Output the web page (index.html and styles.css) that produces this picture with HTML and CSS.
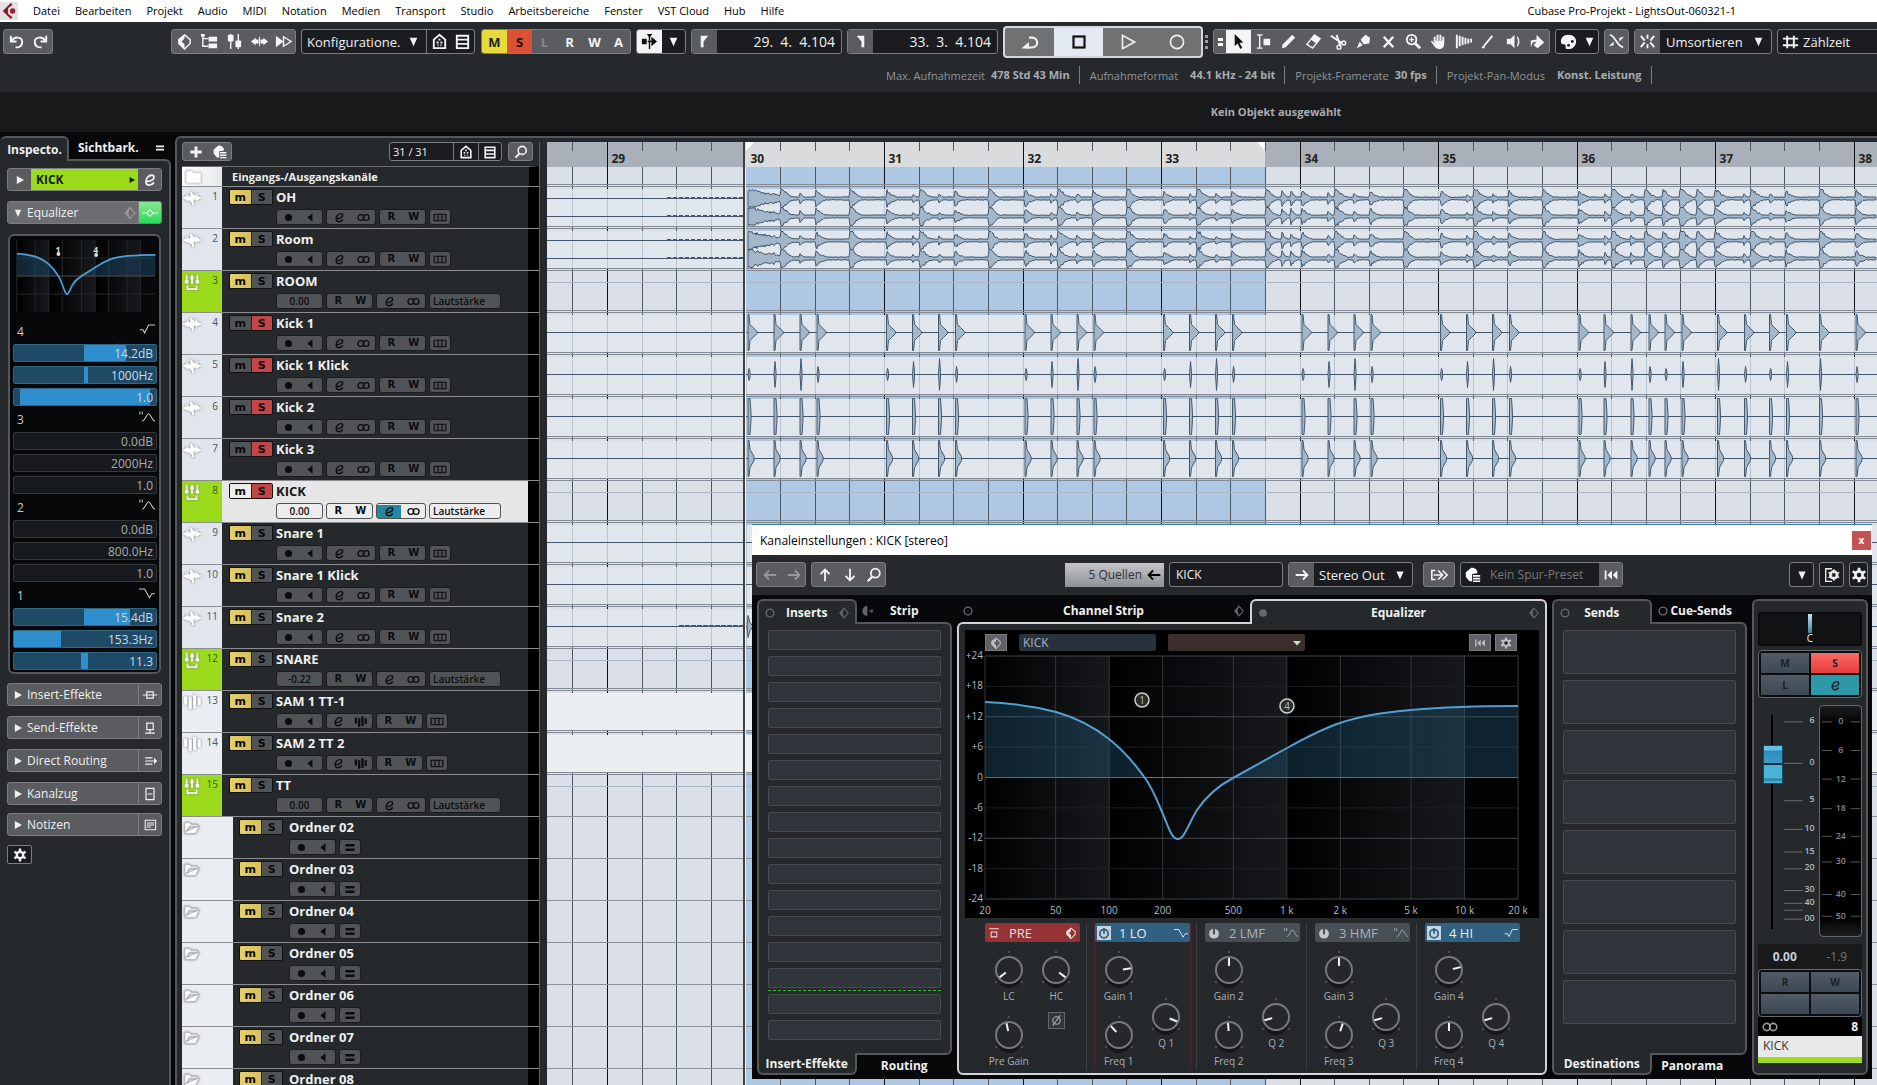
FILE: index.html
```html
<!DOCTYPE html>
<html lang="de">
<head>
  <meta charset="UTF-8" />
  <meta name="viewport" content="width=device-width, initial-scale=1" />
  <title>Cubase Pro-Projekt - LightsOut-060321-1</title>
  <link rel="stylesheet" href="styles.css">
</head>
<body>

  <svg class="sprite" aria-hidden="true">
    <symbol id="i-undo" viewBox="0 0 20 20"><path d="M4 4v6h6M4.500 9.500C8 4 16 5 16 10.500S11 16.500 9 16" fill="none" stroke="currentColor" stroke-width="2"/></symbol>
    <symbol id="i-redo" viewBox="0 0 20 20"><path d="M16 4v6h-6M15.500 9.500C12 4 4 5 4 10.500S9 16.500 11 16" fill="none" stroke="currentColor" stroke-width="2"/></symbol>
    <symbol id="i-diamond" viewBox="0 0 20 20"><path d="M10 3l6 5v4l-6 6-6-6V8z" fill="none" stroke="currentColor" stroke-width="1.500"/><path d="M10 3L4 8v4l6 6v-5l-3-3 3-3z" fill="currentColor"/></symbol>
    <symbol id="i-tree" viewBox="0 0 20 20"><path d="M3 3v12h6M3 7h6" fill="none" stroke="currentColor" stroke-width="1.500"/><path d="M1 2h4v3H1zM9 5h9v5H9zM9 12h9v5H9z" fill="currentColor"/></symbol>
    <symbol id="i-mixer" viewBox="0 0 20 20"><path d="M6 2v16M14 2v16" stroke="currentColor" stroke-width="1.500"/><rect x="3" y="3" width="6" height="7" rx="1" fill="currentColor"/><rect x="11" y="9" width="6" height="7" rx="1" fill="currentColor"/></symbol>
    <symbol id="i-split" viewBox="0 0 20 20"><path d="M1 10l5-4v8zM19 10l-5-4v8zM6 8h3v4H6zM11 8h3v4h-3z" fill="currentColor"/><path d="M10 5v10" stroke="currentColor"/></symbol>
    <symbol id="i-ff" viewBox="0 0 20 20"><path d="M2 4l8 6-8 6z" fill="currentColor"/><path d="M10 5l8 5-8 5z" fill="none" stroke="currentColor" stroke-width="1.500"/></symbol>
    <symbol id="i-down" viewBox="0 0 20 20"><path d="M6 6h8l-4 9z" fill="currentColor"/></symbol>
    <symbol id="i-right" viewBox="0 0 20 20"><path d="M6 5l9 5-9 5z" fill="currentColor"/></symbol>
    <symbol id="i-house" viewBox="0 0 20 20"><path d="M4 17V8l6-5 6 5v9z" fill="none" stroke="currentColor" stroke-width="2"/><path d="M10 7v2M7 11h2M11 11h2M8 14h1M11 14h1" stroke="currentColor" stroke-width="2"/></symbol>
    <symbol id="i-list" viewBox="0 0 20 20"><path d="M4 4h12v13H4zM4 8h12M4 12.500h12" fill="none" stroke="currentColor" stroke-width="2"/></symbol>
    <symbol id="i-scroll" viewBox="0 0 20 20"><path d="M2 7h5v6H2zM12 5l6 5-6 5zM7 2h6l-3 4z" fill="currentColor"/><path d="M10 4v14M8 10h5" stroke="currentColor" stroke-width="1.500"/></symbol>
    <symbol id="i-locl" viewBox="0 0 20 20"><path d="M6 4h8L9 10v6H6z" fill="currentColor"/></symbol>
    <symbol id="i-locr" viewBox="0 0 20 20"><path d="M14 4H6l5 6v6h3z" fill="currentColor"/></symbol>
    <symbol id="i-cycle" viewBox="0 0 20 20"><path d="M6 15h6a4.500 4.500 0 0 0 0-9H9" fill="none" stroke="currentColor" stroke-width="2"/><path d="M2 16l7-6v6z" fill="currentColor"/></symbol>
    <symbol id="i-stop" viewBox="0 0 20 20"><rect x="5" y="5" width="10" height="10" fill="none" stroke="currentColor" stroke-width="2"/></symbol>
    <symbol id="i-play" viewBox="0 0 20 20"><path d="M5 4l11 6-11 6z" fill="none" stroke="currentColor" stroke-width="1.500"/></symbol>
    <symbol id="i-rec" viewBox="0 0 20 20"><circle cx="10" cy="10" r="6" fill="none" stroke="currentColor" stroke-width="1.500"/></symbol>
    <symbol id="i-arrow" viewBox="0 0 20 20"><path d="M6 2l9 9-4 .500 3 5-2 1.500-3-6-3 3z" fill="currentColor"/></symbol>
    <symbol id="i-range" viewBox="0 0 20 20"><path d="M3 3h6M3 17h6M6 3v14" stroke="currentColor" stroke-width="1.500"/><path d="M10 7h7v7h-7z" fill="currentColor"/></symbol>
    <symbol id="i-pencil" viewBox="0 0 20 20"><path d="M3 17l1-4 10-10 3 3L7 16z" fill="currentColor"/></symbol>
    <symbol id="i-eraser" viewBox="0 0 20 20"><path d="M3 13l8-10 6 4-8 10z" fill="none" stroke="currentColor" stroke-width="1.500"/><path d="M7 8l4-5 6 4-4 5z" fill="currentColor"/></symbol>
    <symbol id="i-scissors" viewBox="0 0 20 20"><path d="M2 4l12 8M8 3l4 12" stroke="currentColor" stroke-width="2"/><circle cx="15.500" cy="11.500" r="2" fill="none" stroke="currentColor" stroke-width="1.500"/><circle cx="10.500" cy="16" r="2" fill="none" stroke="currentColor" stroke-width="1.500"/></symbol>
    <symbol id="i-glue" viewBox="0 0 20 20"><path d="M3 17l3-7 3 4zM7 8l5-5 5 3-1 6-6 1z" fill="currentColor"/></symbol>
    <symbol id="i-x" viewBox="0 0 20 20"><path d="M5 5l10 11M15 5L5 16" stroke="currentColor" stroke-width="2.500"/></symbol>
    <symbol id="i-zoom" viewBox="0 0 20 20"><circle cx="8" cy="8" r="5" fill="none" stroke="currentColor" stroke-width="2"/><path d="M12 12l5 5" stroke="currentColor" stroke-width="3"/><path d="M5.500 8h5M8 5.500v5" stroke="currentColor" stroke-width="1.500"/></symbol>
    <symbol id="i-hand" viewBox="0 0 20 20"><path d="M6 10V5M9 9V3M12 9V3M15 10V5" stroke="currentColor" stroke-width="2"/><path d="M5 9h11v4c0 3-2 5-5 5s-5-2-9-8l1-1 3 3z" fill="currentColor"/></symbol>
    <symbol id="i-comp" viewBox="0 0 20 20"><path d="M3 3v14M6 4v11M9 5v9M12 6v7M15 7v5M18 7v4" stroke="currentColor" stroke-width="2"/></symbol>
    <symbol id="i-line" viewBox="0 0 20 20"><path d="M5 15L14 4" stroke="currentColor" stroke-width="2"/><path d="M3 16h3" stroke="currentColor" stroke-width="2"/></symbol>
    <symbol id="i-speaker" viewBox="0 0 20 20"><path d="M3 7h4l4-4v14l-4-4H3z" fill="currentColor"/><path d="M14 5q3 5 0 10" fill="none" stroke="currentColor" stroke-width="1.500"/></symbol>
    <symbol id="i-bucket" viewBox="0 0 20 20"><path d="M9 3l8 8-7 6-4-3 3-4-4 1-2 5V9l6-1z" fill="currentColor"/></symbol>
    <symbol id="i-palette" viewBox="0 0 20 20"><path d="M10 3c-5 0-8 3-8 7 0 2 1 3 3 3 2 0 2 1 2 3s1 2 3 2c5 0 8-4 8-8s-3-7-8-7z" fill="currentColor"/><circle cx="14" cy="10" r="1.500" fill="#1b1c20"/><circle cx="10" cy="14" r="1.500" fill="#1b1c20"/></symbol>
    <symbol id="i-fade" viewBox="0 0 20 20"><path d="M3 3c5 0 8 13 14 13" fill="none" stroke="currentColor" stroke-width="2"/><path d="M2 15l5-1v-4zM18 5l-5 1v4z" fill="currentColor"/></symbol>
    <symbol id="i-snap" viewBox="0 0 20 20"><path d="M10 3v4M10 13v4M3 4l4 5M3 16l4-5M17 4l-4 5M17 16l-4-5" stroke="currentColor" stroke-width="2"/></symbol>
    <symbol id="i-grid" viewBox="0 0 20 20"><path d="M2 7h16M2 14h16M6.500 4v13M13.500 4v13" stroke="currentColor" stroke-width="2"/></symbol>
    <symbol id="i-menu" viewBox="0 0 20 20"><path d="M5 8h10M5 12h10" stroke="currentColor" stroke-width="2"/></symbol>
    <symbol id="i-e" viewBox="0 0 20 20"><path d="M5 11.500C9 12.500 15 10 15 6.500 15 3.500 10 3 7 6.500S4 16 8.500 16.500C11 16.800 13.500 15 15 13" fill="none" stroke="currentColor" stroke-width="2.200"/></symbol>
    <symbol id="i-eqon" viewBox="0 0 20 20"><path d="M0 10h6M14 10h6M10 6l4 4-4 4-4-4z" fill="none" stroke="currentColor" stroke-width="1.400"/></symbol>
    <symbol id="i-bypass" viewBox="0 0 20 20"><path d="M10 3l6 7-6 7-6-7z" fill="none" stroke="currentColor" stroke-width="1.500"/><path d="M10 3L4 10l6 7-2-7z" fill="currentColor"/></symbol>
    <symbol id="i-ins" viewBox="0 0 20 20"><path d="M1 10h18M6 6h8v8H6z" fill="none" stroke="currentColor" stroke-width="1.500"/></symbol>
    <symbol id="i-send" viewBox="0 0 20 20"><path d="M6 4h8v8H6zM10 12v4M4 16.500h12" fill="none" stroke="currentColor" stroke-width="1.500"/></symbol>
    <symbol id="i-route" viewBox="0 0 20 20"><path d="M4 6h9M4 10h12M4 14h9" stroke="currentColor" stroke-width="1.500"/><path d="M15 6l4 4-4 4z" fill="currentColor"/></symbol>
    <symbol id="i-strip" viewBox="0 0 20 20"><path d="M5 3h10v14H5zM7 10h6" fill="none" stroke="currentColor" stroke-width="1.500"/></symbol>
    <symbol id="i-note" viewBox="0 0 20 20"><path d="M4 4h13v12H4zM6 7.500h9M6 10h9M6 12.500h5" fill="none" stroke="currentColor" stroke-width="1.300"/></symbol>
    <symbol id="i-gear" viewBox="0 0 20 20"><path d="M10 2v16M3 6l14 8M17 6L3 14" stroke="currentColor" stroke-width="3"/><circle cx="10" cy="10" r="5.500" fill="currentColor"/><circle cx="10" cy="10" r="2.500" fill="#1b1c20"/></symbol>
    <symbol id="i-plus" viewBox="0 0 20 20"><path d="M10 3v14M3 10h14" stroke="currentColor" stroke-width="3.500"/></symbol>
    <symbol id="i-preset" viewBox="0 0 20 20"><path d="M8 2c4 0 7 2 7 6l-6 1v8H6L2 12V7z" fill="currentColor"/><path d="M10 11h8M10 14h8M10 17h8" stroke="currentColor" stroke-width="1.800"/></symbol>
    <symbol id="i-search" viewBox="0 0 20 20"><circle cx="11.500" cy="8" r="5" fill="none" stroke="currentColor" stroke-width="2"/><path d="M8 12l-5 5" stroke="currentColor" stroke-width="2.500"/></symbol>
    <symbol id="i-wave" viewBox="0 0 20 20"><path d="M0 10h2M3 8v4M5 6v7M7 8v5M9 3v12M11 5v13M13 7v5M15 5v8M17 8v4M18 10h2" stroke="currentColor" stroke-width="2"/></symbol>
    <symbol id="i-group" viewBox="0 0 20 20"><path d="M4 2v10M10 2v10M16 2v10M5 14v4h10v-4" fill="none" stroke="currentColor" stroke-width="2"/><path d="M2 8h4v3H2zM8 4h4v3H8zM14 8h4v3h-4z" fill="currentColor"/></symbol>
    <symbol id="i-inst" viewBox="0 0 20 20"><path d="M3 4v9M8 5v13M13 2v15M18 5v9" stroke="currentColor" stroke-width="3.500"/></symbol>
    <symbol id="i-folder" viewBox="0 0 20 20"><path d="M2 4h6l2 2h8v11H2z" fill="#fff" stroke="#cfd3d8"/></symbol>
    <symbol id="i-open" viewBox="0 0 20 20"><path d="M2 15V4h5l2 2h7v3M2 16h12l4-8H7z" fill="#fff" stroke="#b4b9be"/></symbol>
    <symbol id="i-dot" viewBox="0 0 20 20"><circle cx="10" cy="10" r="5.500" fill="currentColor"/></symbol>
    <symbol id="i-mon" viewBox="0 0 20 20"><path d="M6 8h2l5-5v14l-5-5H6z" fill="currentColor"/></symbol>
    <symbol id="i-stereo" viewBox="0 0 20 20"><circle cx="6" cy="10" r="4.500" fill="none" stroke="currentColor" stroke-width="2"/><circle cx="14" cy="10" r="4.500" fill="none" stroke="currentColor" stroke-width="2"/></symbol>
    <symbol id="i-lanes" viewBox="0 0 20 20"><path d="M1 5h18v10H1zM7 5v10M13 5v10" fill="none" stroke="currentColor" stroke-width="1.800"/></symbol>
    <symbol id="i-equal" viewBox="0 0 20 20"><path d="M3 6.500h14M3 13.500h14" stroke="currentColor" stroke-width="4"/></symbol>
    <symbol id="i-left2" viewBox="0 0 20 20"><path d="M17 10H4M9 5l-5 5 5 5" fill="none" stroke="currentColor" stroke-width="2"/></symbol>
    <symbol id="i-right2" viewBox="0 0 20 20"><path d="M3 10h13M11 5l5 5-5 5" fill="none" stroke="currentColor" stroke-width="2"/></symbol>
    <symbol id="i-up2" viewBox="0 0 20 20"><path d="M10 17V4M5 9l5-5 5 5" fill="none" stroke="currentColor" stroke-width="2"/></symbol>
    <symbol id="i-down2" viewBox="0 0 20 20"><path d="M10 3v13M5 11l5 5 5-5" fill="none" stroke="currentColor" stroke-width="2"/></symbol>
    <symbol id="i-export" viewBox="0 0 20 20"><path d="M6 5H2v10h4M4 10h10M9 5l5 5-5 5M14 5l5 5-5 5" fill="none" stroke="currentColor" stroke-width="1.800"/></symbol>
    <symbol id="i-rewind" viewBox="0 0 20 20"><path d="M4 5v10" stroke="currentColor" stroke-width="2"/><path d="M11 5v10l-5-5zM17 5v10l-5-5z" fill="currentColor"/></symbol>
    <symbol id="i-winset" viewBox="0 0 20 20"><path d="M10 3H3v14h7" fill="none" stroke="currentColor" stroke-width="1.500"/><circle cx="12" cy="10" r="4" fill="none" stroke="currentColor" stroke-width="2.500"/><path d="M12 3.500v13M6 7l12 6M18 7L6 13" stroke="currentColor" stroke-width="1.500"/><circle cx="12" cy="10" r="2" fill="#1b1c20"/></symbol>
    <symbol id="i-hishelf" viewBox="0 0 20 20"><path d="M1 11h4l2 4 5-10h8" fill="none" stroke="currentColor" stroke-width="1.300"/></symbol>
    <symbol id="i-loshelf" viewBox="0 0 20 20"><path d="M0 5h7l6 11 3-5h4" fill="none" stroke="currentColor" stroke-width="1.300"/></symbol>
    <symbol id="i-bell" viewBox="0 0 20 20"><path d="M1 3v4M4 3v4M4 15c4 0 5-9 8-9s4 9 8 9" fill="none" stroke="currentColor" stroke-width="1.300"/></symbol>
    <symbol id="i-pre" viewBox="0 0 20 20"><path d="M3 4h14M6 8.500h8v7H6z" fill="none" stroke="currentColor" stroke-width="1.500"/></symbol>
    <symbol id="i-power" viewBox="0 0 20 20"><circle cx="10" cy="11" r="6" fill="none" stroke="currentColor" stroke-width="2.500"/><path d="M10 3v8" stroke="currentColor" stroke-width="2.500"/></symbol>
    <symbol id="i-powerf" viewBox="0 0 20 20"><circle cx="10" cy="11" r="7" fill="#c4c8cb"/><path d="M10 3v9" stroke="#485057" stroke-width="3"/></symbol>
    <symbol id="i-ring" viewBox="0 0 20 20"><circle cx="10" cy="10" r="5.500" fill="none" stroke="currentColor" stroke-width="2"/></symbol>
    <symbol id="i-half" viewBox="0 0 20 20"><path d="M9 3v14a7 7 0 0 1 0-14z" fill="currentColor"/><path d="M11 10h7M15.500 7v6" stroke="currentColor" stroke-width="1.500"/></symbol>
    <symbol id="i-phase" viewBox="0 0 20 20"><circle cx="10" cy="10" r="5" fill="none" stroke="currentColor" stroke-width="1.500"/><path d="M5 17L15 3" stroke="currentColor" stroke-width="1.500"/></symbol>
  </svg>

  <nav class="menubar">
    <svg class="logo" viewBox="0 0 20 20"><path d="M12 1L3 10l9 9 2-2-5-4V7l5-4z" fill="#8d1c2c"/><circle cx="14" cy="10" r="3" fill="#a1202f"/></svg>
    <a href="#">Datei</a><a href="#">Bearbeiten</a><a href="#">Projekt</a><a href="#">Audio</a><a href="#">MIDI</a><a href="#">Notation</a><a href="#">Medien</a><a href="#">Transport</a><a href="#">Studio</a><a href="#">Arbeitsbereiche</a><a href="#">Fenster</a><a href="#">VST Cloud</a><a href="#">Hub</a><a href="#">Hilfe</a>
    <span class="doc-title">Cubase Pro-Projekt - LightsOut-060321-1</span>
  </nav>

  <header class="toolbar">
    <div class="grp undo" data-icons="undo redo"></div>
    <div class="grp setup" data-icons="diamond tree mixer split ff"></div>
    <div class="grp dark">
      <label class="drop config"><select aria-label="Konfiguration"><option>Konfiguratione.</option></select><svg class="ico"><use href="#i-down"/></svg></label>
      <button class="tb line" aria-label="Zonen"><svg class="ico"><use href="#i-house"/></svg></button>
      <button class="tb" aria-label="Liste"><svg class="ico"><use href="#i-list"/></svg></button>
    </div>
    <div class="grp states">
      <button class="tb yellow">M</button><button class="tb red">S</button><button class="tb off">L</button><button class="tb">R</button><button class="tb">W</button><button class="tb">A</button>
    </div>
    <div class="grp dark">
      <button class="tb on" aria-label="Auto-Scroll"><svg class="ico"><use href="#i-scroll"/></svg></button>
      <button class="tb" aria-label="Optionen"><svg class="ico"><use href="#i-down"/></svg></button>
    </div>
    <div class="grp dark locator"><button class="tb fill" aria-label="Linker Locator"><svg class="ico"><use href="#i-locl"/></svg></button><input aria-label="Linker Locator Position" value="29.  4.  4.104"></div>
    <div class="grp dark locator"><button class="tb fill" aria-label="Rechter Locator"><svg class="ico"><use href="#i-locr"/></svg></button><input aria-label="Rechter Locator Position" value="33.  3.  4.104"></div>
    <div class="transport">
      <button aria-label="Cycle"><svg class="ico"><use href="#i-cycle"/></svg></button>
      <button class="on" aria-label="Stop"><svg class="ico"><use href="#i-stop"/></svg></button>
      <button aria-label="Start"><svg class="ico"><use href="#i-play"/></svg></button>
      <button aria-label="Aufnahme"><svg class="ico"><use href="#i-rec"/></svg></button>
    </div>
    <span class="grip"></span>
    <div class="grp tools" data-icons="arrow range pencil eraser scissors glue x zoom hand comp line speaker bucket"><span class="handle"></span></div>
    <div class="grp dark color">
      <button class="tb" aria-label="Farbe"><svg class="ico"><use href="#i-palette"/></svg></button><button class="tb small" aria-label="Farbauswahl"><svg class="ico"><use href="#i-down"/></svg></button>
    </div>
    <div class="grp" data-icons="fade"></div>
    <div class="grp dark"><button class="tb fill" aria-label="Raster"><svg class="ico"><use href="#i-snap"/></svg></button>
      <label class="drop snap"><select aria-label="Rastermodus"><option>Umsortieren</option></select><svg class="ico"><use href="#i-down"/></svg></label></div>
    <div class="grp dark beat"><button class="tb" aria-label="Rastertyp"><svg class="ico"><use href="#i-grid"/></svg></button><span>Zählzeit</span></div>
  </header>

  <div class="status">
    <span>Max. Aufnahmezeit</span><b>478 Std 43 Min</b>
    <span>Aufnahmeformat</span><b class="wide">44.1 kHz - 24 bit</b>
    <span>Projekt-Framerate</span><b>30 fps</b>
    <span>Projekt-Pan-Modus</span><b class="wide">Konst. Leistung</b>
  </div>

  <div class="infoline">Kein Objekt ausgewählt</div>

  <main class="workspace">
    <aside class="inspector">
      <div class="tabs">
        <button class="tab active">Inspecto.</button>
        <button class="tab">Sichtbark.</button>
        <svg class="ico"><use href="#i-menu"/></svg>
      </div>
      <div class="inspector-body">
        <div class="channel-name">
          <button aria-label="Aufklappen"><svg class="ico"><use href="#i-right"/></svg></button>
          <strong>KICK <svg class="ico"><use href="#i-right"/></svg></strong>
          <button aria-label="Kanal bearbeiten"><svg class="ico"><use href="#i-e"/></svg></button>
        </div>
        <div class="section open">
          <button class="section-title"><svg class="ico"><use href="#i-down"/></svg>Equalizer</button>
          <svg class="ico dim"><use href="#i-bypass"/></svg>
          <button class="section-icon green" aria-label="EQ aktiv"><svg class="ico"><use href="#i-eqon"/></svg></button>
        </div>
        <div class="eq-box">
          <svg class="mini-eq" viewBox="0 0 149 76" preserveAspectRatio="none" id="miniEq"></svg>
          <div id="eqBars"></div>
        </div>
        <div id="sections"></div>
        <button class="gear" aria-label="Einstellungen"><svg class="ico"><use href="#i-gear"/></svg></button>
      </div>
    </aside>

    <section class="project">
      <div class="tracklist">
        <div class="list-head">
          <div class="grp" data-icons="plus preset"></div>
          <div class="grp dark count"><span>31 / 31</span>
            <button class="tb line" aria-label="Zonen"><svg class="ico"><use href="#i-house"/></svg></button>
            <button class="tb line" aria-label="Liste"><svg class="ico"><use href="#i-list"/></svg></button></div>
          <div class="grp" data-icons="search"></div>
        </div>
        <div class="io-row"><span class="io-color"><svg class="ico"><use href="#i-folder"/></svg></span><b>Eingangs-/Ausgangskanäle</b></div>
        <div id="tracks"></div>
      </div>
      <svg class="arrange" id="arrange"></svg>
    </section>
  </main>

  <section class="window">
    <div class="window-title">Kanaleinstellungen : KICK [stereo]<button aria-label="Schließen">x</button></div>
    <div class="window-bar">
      <div class="grp faded" data-icons="left2 right2"></div>
      <div class="grp" data-icons="up2 down2 search"></div>
      <button class="sources">5 Quellen<svg class="ico"><use href="#i-left2"/></svg></button>
      <input class="chan" aria-label="Kanalname" value="KICK">
      <div class="grp dark"><button class="tb fill" aria-label="Ausgang"><svg class="ico"><use href="#i-right2"/></svg></button>
        <label class="drop out"><select aria-label="Ausgangsrouting"><option>Stereo Out</option></select><svg class="ico"><use href="#i-down"/></svg></label></div>
      <div class="grp export" data-icons="export"></div>
      <div class="grp dark preset"><svg class="ico"><use href="#i-preset"/></svg><span>Kein Spur-Preset</span><button class="tb fill" aria-label="Zurücksetzen"><svg class="ico"><use href="#i-rewind"/></svg></button></div>
      <div class="right">
        <button class="sq" aria-label="Menü"><svg class="ico"><use href="#i-down"/></svg></button>
        <button class="sq" aria-label="Fensterlayout"><svg class="ico"><use href="#i-winset"/></svg></button>
        <button class="sq narrow" aria-label="Einstellungen"><svg class="ico"><use href="#i-gear"/></svg></button>
      </div>
    </div>
    <div class="window-body">
      <div class="panel inserts">
        <div class="tabs"><button class="tab active"><svg class="ico"><use href="#i-ring"/></svg><span>Inserts</span><svg class="ico"><use href="#i-bypass"/></svg></button><button class="tab"><svg class="ico"><use href="#i-half"/></svg><span>Strip</span></button></div>
        <div class="panel-body" id="inserts"></div>
        <div class="tabs bottom"><button class="tab active"><span>Insert-Effekte</span></button><button class="tab"><span>Routing</span></button></div>
      </div>

      <div class="panel equalizer">
        <div class="tabs"><button class="tab"><svg class="ico"><use href="#i-ring"/></svg><span>Channel Strip</span><svg class="ico"><use href="#i-bypass"/></svg></button><button class="tab active"><svg class="ico"><use href="#i-dot"/></svg><span>Equalizer</span><svg class="ico"><use href="#i-bypass"/></svg></button></div>
        <div class="panel-body">
          <div class="display">
            <div class="display-head">
              <button aria-label="Vergleich"><svg class="ico"><use href="#i-diamond"/></svg></button>
              <input aria-label="Spektrum Kanal" value="KICK">
              <label class="drop"><select aria-label="Vergleichskanal"><option></option></select><svg class="ico" viewBox="0 0 20 20"><path d="M2 6h16l-8 9z" fill="#d8d8d8"/></svg></label>
              <button class="first" aria-label="Zurücksetzen"><svg class="ico"><use href="#i-rewind"/></svg></button>
              <button aria-label="Einstellungen"><svg class="ico"><use href="#i-gear"/></svg></button>
            </div>
            <svg class="plot" id="plot" viewBox="0 0 574 266"></svg>
          </div>
          <div class="bands" id="bands"></div>
        </div>
      </div>

      <div class="panel sends">
        <div class="tabs"><button class="tab active"><svg class="ico"><use href="#i-ring"/></svg><span>Sends</span></button><button class="tab"><svg class="ico"><use href="#i-ring"/></svg><span>Cue-Sends</span></button></div>
        <div class="panel-body" id="sends"></div>
        <div class="tabs bottom"><button class="tab active"><span>Destinations</span></button><button class="tab"><span>Panorama</span></button></div>
      </div>

      <div class="strip">
        <div class="pan"><i></i>C</div>
        <div class="pad"><button>M</button><button class="solo">S</button><button>L</button><button class="edit" aria-label="Bearbeiten"><svg class="ico"><use href="#i-e"/></svg></button></div>
        <div class="fader-area">
          <input type="range" class="fader" aria-label="Pegel" min="0" max="100" value="83">
          <svg class="scale" id="scale" viewBox="0 0 32 232"></svg>
          <svg class="meter" id="meter" viewBox="0 0 42 230"></svg>
        </div>
        <div class="levels"><b>0.00</b><span>-1.9</span></div>
        <div class="pad rw"><button>R</button><button>W</button><button aria-label="Leer"></button><button aria-label="Leer"></button></div>
        <div class="chan-no"><svg class="ico"><use href="#i-stereo"/></svg><b>8</b></div>
        <div class="chan-name">KICK</div>
      </div>
    </div>
  </section>

  <script src="script.js"></script>
</body>
</html>
```
FILE: styles.css
```css
* {
  box-sizing: border-box;
}
body {
  margin: 0;
  height: 100vh;
  overflow: hidden;
  display: flex;
  flex-direction: column;
  position: relative;
  background: #08080a;
  color: #f0f0f0;
  font-family: "Open Sans", "Noto Sans", sans-serif;
  font-size: 12px;
}
button, input, select {
  font-family: inherit;
  font-size: 12px;
  color: inherit;
  background: none;
  border: 0;
  padding: 0;
  margin: 0;
  border-radius: 0;
}
select {
  appearance: none;
}
.sprite {
  position: absolute;
  width: 0;
  height: 0;
}
.ico {
  width: 16px;
  height: 16px;
  flex: none;
  display: block;
}

/* menu */
.menubar {
  height: 22px;
  flex: none;
  display: flex;
  align-items: center;
  gap: 15px;
  padding-bottom: 1px;
  background: #fff;
  color: #000;
  font-size: 11px;
  white-space: nowrap;
}
.menubar a {
  color: inherit;
  text-decoration: none;
}
.logo {
  width: 18px;
  height: 18px;
  background: #e2e2e4;
}
.doc-title {
  margin-left: auto;
  margin-right: 141px;
}

/* main toolbar */
.toolbar {
  height: 40px;
  flex: none;
  display: flex;
  align-items: center;
  padding: 0 0 1px 3px;
  gap: 5px;
  background: #25292c;
  overflow: hidden;
}
.toolbar .ico {
  width: 19px;
  height: 19px;
}
.grp {
  display: flex;
  flex: none;
  height: 25px;
  border: 1px solid #7b7d80;
  border-radius: 3px;
  background: #5a5c5f;
  overflow: hidden;
  align-items: stretch;
}
.grp.dark {
  background: #1b1c20;
}
.tb {
  width: 25px;
  display: flex;
  flex: none;
  align-items: center;
  justify-content: center;
  color: #f4f4f4;
  font-weight: 700;
}
.grp .tb:last-child {
  width: 23px;
}
.tb.fill {
  background: #5a5c5f;
}
.tb.line {
  border-left: 1px solid #7b7d80;
}
.tb.on {
  background: #f4f4f4;
  color: #111;
}
.tb.off {
  color: #85878a;
}
.tb.yellow {
  background: #e6da3c;
  color: #1c1c10;
}
.tb.red {
  background: #da5136;
  color: #1c1010;
}
.states {
  margin-left: 1px;
}
.states .tb {
  font-size: 13px;
}
.undo {
  margin-right: 113px;
}
.drop {
  display: flex;
  align-items: center;
}
.drop select {
  flex: 1;
  width: 0;
  font-size: 13px;
}
.drop .ico {
  margin-right: 3px;
}
.config {
  width: 124px;
  padding-left: 5px;
}
.snap {
  width: 111px;
  padding-left: 6px;
}
.out {
  width: 98px;
  padding-left: 5px;
}
.locator input {
  width: 124px;
  text-align: right;
  padding-right: 6px;
  font-size: 14px;
  white-space: pre;
}
.transport {
  display: flex;
  flex: none;
  height: 32px;
  width: 200px;
  border: 2px solid #d5d7d9;
  border-radius: 4px;
  background: #707173;
  overflow: hidden;
}
.transport button {
  flex: 1;
  display: flex;
  align-items: center;
  justify-content: center;
}
.transport .ico {
  width: 22px;
  height: 22px;
}
.transport .on {
  background: #e3e9f2;
  color: #111;
}
.grip {
  width: 3px;
  flex: none;
  height: 14px;
  margin-left: -3px;
  border-left: 3px dotted #9a9c9e;
}
.handle {
  width: 12px;
  background: linear-gradient(#fff, #fff) 4px 8px / 5px 3px no-repeat, linear-gradient(#fff, #fff) 4px 13px / 5px 3px no-repeat;
}
.tools .handle + .tb {
  background: #f4f4f4;
  color: #111;
}
.color .tb.small:last-child {
  width: 17px;
}
.beat {
  width: 120px;
  align-items: center;
  font-size: 13px;
}

/* status and info line */
.status {
  height: 30px;
  flex: none;
  display: flex;
  align-items: center;
  padding: 0 0 4px 886px;
  background: #25292c;
  color: #8f9396;
  font-size: 11px;
  white-space: nowrap;
}
.status b {
  line-height: 18px;
  padding: 0 9px 0 6px;
  margin-right: 10px;
  border-right: 1px solid #7d8083;
  color: #a9acaf;
}
.status .wide {
  padding-left: 12px;
}
.infoline {
  height: 40px;
  flex: none;
  padding-left: 675px;
  background: #18191b;
  color: #a9acaf;
  font-size: 11px;
  font-weight: 700;
  line-height: 40px;
  text-align: center;
}
.workspace {
  flex: 1;
  min-height: 0;
  padding-top: 4px;
  display: flex;
  gap: 4px;
}

/* inspector */
.inspector {
  width: 171px;
  flex: none;
  display: flex;
  flex-direction: column;
}
.tabs {
  display: flex;
  height: 23px;
  flex: none;
  align-items: stretch;
}
.tab {
  flex: 1;
  display: flex;
  align-items: center;
  justify-content: center;
  font-size: 12px;
  font-weight: 700;
  white-space: nowrap;
}
.tab.active {
  position: relative;
  height: 25px;
  background: #25292c;
  border: 2px solid #55585b;
  border-bottom: 0;
  border-radius: 6px 6px 0 0;
}
.inspector .tabs .tab {
  flex: none;
  padding: 0 5px 0 9px;
}
.inspector .tabs .active {
  width: 69px;
  padding: 0 5px 0 7px;
  border-left: 0;
}
.inspector .tabs .ico {
  margin: 4px 0 0 8px;
}
.inspector-body {
  flex: 1;
  background: #25292c;
  border: 2px solid #55585b;
  border-left: 0;
  border-bottom: 0;
  border-radius: 0 6px 0 0;
  padding: 7px 7px 0;
}
.channel-name, .section {
  display: flex;
  height: 23px;
  margin-bottom: 10px;
  border: 1px solid #7b7d80;
  border-radius: 3px;
  background: #5a5c5f;
  overflow: hidden;
  align-items: stretch;
}
.channel-name button, .section-icon {
  width: 23px;
  display: flex;
  align-items: center;
  justify-content: center;
}
.channel-name strong {
  flex: 1;
  display: flex;
  align-items: center;
  justify-content: space-between;
  padding-left: 5px;
  background: #9cdb1c;
  color: #15200a;
}
.channel-name strong .ico {
  width: 12px;
  height: 12px;
}
.section-title {
  flex: 1;
  display: flex;
  align-items: center;
  gap: 1px;
  padding-left: 2px;
}
.section.open {
  background: #6c6d70;
  align-items: center;
}
.section-icon {
  height: 21px;
  border-left: 1px solid #7b7d80;
}
.green {
  background: linear-gradient(#8be692, #25dd59);
}
.dim {
  color: #98999c;
}
.eq-box {
  margin: 0 1px 9px;
  border: 2px solid #55585b;
  border-radius: 6px;
  background: #07080a;
  padding: 2px 2px 2px 3px;
}
.mini-eq {
  display: block;
  width: 100%;
  height: 76px;
  margin-bottom: 4px;
}
.eq-head {
  display: flex;
  justify-content: space-between;
  align-items: center;
  height: 26px;
  padding: 0 2px 0 4px;
  color: #c8cbce;
}
.eq-head .ico {
  margin-bottom: 4px;
}
.bar {
  display: grid;
  height: 18px;
  margin-bottom: 4px;
}
.bar:nth-child(4n) {
  margin-bottom: 0;
}
.bar input, .bar span {
  grid-area: 1 / 1;
}
.bar input {
  appearance: none;
  width: 100%;
  height: 18px;
  border: 1px solid #33373c;
  border-radius: 2px;
  background: #16191e;
}
.bar.active input {
  border-color: #2f6684;
  background: linear-gradient(90deg, #1f4a66 var(--from), #2f8fce var(--from), #2f8fce var(--to), #1f4a66 var(--to));
}
.bar input::-webkit-slider-thumb {
  appearance: none;
  width: 1px;
}
.bar span {
  position: relative;
  text-align: right;
  padding-right: 4px;
  line-height: 19px;
  color: #a9acaf;
  pointer-events: none;
}
.bar.active span {
  color: #c6dcea;
}
.section:last-child {
  margin-top: -2px;
}
.gear {
  width: 25px;
  height: 19px;
  margin-top: -1px;
  border: 1px solid #7b7d80;
  border-radius: 2px;
  background: #1b1c20;
  display: flex;
  align-items: center;
  justify-content: center;
}

/* project: track list and arrangement */
.project {
  flex: 1;
  min-width: 0;
  display: flex;
  overflow: hidden;
  border: 2px solid #55585b;
  border-width: 2px 0 0 2px;
  border-radius: 6px 0 0 0;
  background: #25292c;
}
.tracklist {
  width: 358px;
  flex: none;
  margin: 4px 7px 0 5px;
  border-right: 1px solid #5d6063;
}
.list-head {
  display: flex;
  height: 24px;
  gap: 6px;
  padding-right: 6px;
}
.list-head .grp {
  height: 19px;
}
.count {
  margin-left: auto;
  width: 113px;
  font-size: 11px;
}
.count span {
  flex: 1;
  padding-left: 3px;
  line-height: 17px;
}
.io-row {
  display: flex;
  height: 20px;
  border-top: 1px solid #6a6d70;
  border-right: 10px solid #000;
  font-size: 11px;
}
.io-color {
  width: 40px;
  padding-left: 2px;
  background: linear-gradient(90deg, #fff, #e6e9ec);
}
.io-color .ico {
  width: 19px;
  height: 19px;
  filter: drop-shadow(0 0 1px #b0b5ba);
}
.io-row b {
  padding: 2px 0 0 10px;
}
.track {
  display: flex;
  height: 42px;
  border-top: 1px solid #8b8d90;
  background: linear-gradient(270deg, #000 11px, transparent 11px);
}
.track-color {
  width: 40px;
  display: flex;
  justify-content: space-between;
  padding: 2px 4px 0 1px;
  background: #e1e5ec;
  color: #4c5258;
  font-size: 10px;
}
.track-color .ico {
  width: 18px;
  height: 18px;
  color: #fff;
  filter: drop-shadow(0 0 1px #6f757d);
}
.group .track-color {
  background: #9cdb1c;
  color: #3c5a10;
}
.inst .track-color, .folder .track-color {
  background: #eaeef2;
}
.folder .track-color {
  width: 51px;
}
.track-main {
  flex: 1;
  margin-right: 11px;
  display: grid;
  grid-template-columns: 47px 1fr;
  grid-template-rows: 18px 16px;
  row-gap: 3px;
  padding: 1px 0 0 7px;
}
.folder .track-main {
  grid-template-columns: 50px 1fr;
  padding-left: 6px;
}
.track-main h3 {
  margin: 0;
  font-size: 13px;
  line-height: 18px;
}
.ms {
  display: flex;
  height: 16px;
  width: 44px;
  margin-top: 1px;
  border: 1px solid #111;
  border-radius: 2px;
  overflow: hidden;
}
.ms button {
  flex: 1;
  background: #515457;
  color: #08080a;
  font: 700 11px/13px "DejaVu Sans", sans-serif;
}
.ms button + button {
  border-left: 1px solid #222;
}
.ms .muted {
  background: linear-gradient(90deg, #e5d06c, #d8bf5a);
}
.ms .soloed {
  background: #c24548;
}
.controls {
  grid-column: 2;
  display: flex;
  gap: 3px;
}
.controls > span, .controls > button {
  display: flex;
  align-items: center;
  justify-content: space-around;
  height: 16px;
  width: 47px;
  border: 1px solid #1a1c1e;
  border-radius: 3px;
  background: #515457;
  color: #0b0c0e;
  font-size: 10px;
  font-weight: 600;
  line-height: 14px;
}
.controls > span:has(.wide) {
  width: 50px;
}
.controls span button {
  flex: 1;
  display: flex;
  justify-content: center;
  font: 700 10px/14px "DejaVu Sans", sans-serif;
}
.controls .ico {
  width: 13px;
  height: 13px;
}
.controls > .lane {
  width: 22px;
}
.controls .lane .ico {
  width: 16px;
}
.controls > .param {
  width: 72px;
  padding-left: 3px;
  justify-content: flex-start;
}
.selected .track-main {
  background: #e6e6e6;
  color: #161618;
}
.selected .ms button:first-child, .selected .controls > * {
  background: #ededed;
}
.selected .controls > * {
  border-color: #4e5052;
}
.controls .edit {
  background: #24889f;
}
.arrange {
  flex: 1;
  min-width: 0;
  height: 100%;
  margin-top: 4px;
  background: #dbe0e8;
}
.arrange text {
  font: 700 12px "Open Sans", sans-serif;
  fill: #222;
}

/* channel window */
.window {
  position: absolute;
  left: 752px;
  right: 5px;
  top: 524px;
  background: #08080a;
  border-top: 1px solid #3d7fb8;
}
.window-title {
  height: 30px;
  display: flex;
  align-items: center;
  justify-content: space-between;
  padding: 0 1px 0 8px;
  background: #fff;
  color: #000;
}
.window-title button {
  width: 19px;
  height: 19px;
  background: #c25254;
  color: #fff;
  font-size: 10px;
  font-weight: 700;
}
.window-bar {
  height: 40px;
  display: flex;
  align-items: center;
  padding: 0 4px 1px;
  gap: 5px;
  background: #25292c;
}
.window-bar .ico {
  width: 18px;
  height: 18px;
}
.faded .tb {
  color: #96989a;
}
.sources {
  width: 99px;
  height: 24px;
  margin-left: 174px;
  display: flex;
  align-items: center;
  justify-content: flex-end;
  gap: 3px;
  padding-right: 1px;
  background: linear-gradient(#c3c5c8, #8f9295);
  color: #303235;
}
.sources .ico {
  color: #000;
}
.chan {
  width: 114px;
  height: 25px;
  padding-left: 6px;
  border: 1px solid #7b7d80;
  border-radius: 3px;
  background: #1b1c20;
}
.window-bar .export {
  margin-left: 5px;
  width: 32px;
  justify-content: center;
}
.preset {
  width: 163px;
  align-items: center;
  color: #77797c;
}
.preset > .ico {
  margin: 0 3px;
  color: #fff;
}
.preset span {
  flex: 1;
  padding-left: 5px;
}
.preset .tb {
  height: 100%;
}
.right {
  margin-left: auto;
  display: flex;
  gap: 5px;
}
.sq {
  width: 25px;
  height: 25px;
  border: 1px solid #7b7d80;
  border-radius: 3px;
  background: #1b1c20;
  display: flex;
  align-items: center;
  justify-content: center;
}
.sq.narrow {
  width: 19px;
}
.window-body {
  display: flex;
  gap: 5px;
  padding: 4px 4px 4px 5px;
  height: 484px;
}
.panel {
  width: 195px;
  flex: none;
  display: flex;
  flex-direction: column;
}
.panel-body {
  flex: 1;
  background: #25292c;
  border: 2px solid #55585b;
  border-radius: 0 6px 6px 0;
  padding: 6px 9px;
}
.panel .tab {
  min-width: 0;
}
.panel .tab span {
  flex: 1;
}
.panel .tab .ico {
  width: 14px;
  height: 14px;
  margin: 0 4px;
  color: #66696c;
}
.panel .ico + span:last-child {
  padding-right: 22px;
}
.panel.sends .tab:last-child .ico {
  margin: 0 0 0 4px;
}
.panel.sends .tab:last-child span {
  padding-right: 14px;
}
.tabs.bottom {
  height: 20px;
}
.tabs.bottom .active {
  height: 22px;
  margin-top: -2px;
  border: 2px solid #55585b;
  border-top: 0;
  border-radius: 0 0 6px 6px;
}
.slot {
  height: 20px;
  margin-bottom: 6px;
  border: 1px solid #484c51;
  border-radius: 2px;
  background: #30343b;
}
.slot.postline {
  margin-bottom: 2px;
}
.postfader {
  height: 1px;
  border-top: 1px dashed #2fbd2f;
  margin-bottom: 3px;
}
.sends .slot {
  height: 44px;
}
.equalizer {
  flex: 1;
  min-width: 0;
}
.equalizer .panel-body {
  border-color: #d2d4d6;
  border-radius: 6px 0 6px 6px;
  padding: 6px 6px 0;
}
.equalizer .tab.active {
  border-color: #d2d4d6;
}
.display {
  background: #000;
}
.display-head {
  display: flex;
  height: 22px;
  padding: 4px 22px 0 20px;
  gap: 4px;
}
.display-head button {
  width: 22px;
  height: 17px;
  display: flex;
  align-items: center;
  justify-content: center;
  background: #5f6164;
  border: 1px solid #77797c;
  color: #bdbfc1;
}
.display-head .first {
  margin-left: auto;
}
.display-head input {
  width: 137px;
  height: 17px;
  margin: 0 8px;
  padding-left: 4px;
  border-radius: 2px;
  background: #29323b;
  color: #a7b4bf;
}
.display-head .drop {
  width: 137px;
  height: 17px;
  border-radius: 2px;
  background: #3a2f2c;
}
.display-head .ico {
  width: 14px;
  height: 14px;
}
.display-head .drop .ico {
  width: 10px;
}
.plot {
  display: block;
  width: 100%;
  overflow: visible;
}
.plot text {
  font-size: 10px;
  fill: #b0bcc6;
}
.bands {
  display: flex;
  gap: 15px;
  padding: 5px 19px 0 20px;
}
.band {
  flex: 1;
  min-width: 0;
  height: 147px;
  display: grid;
  grid-template-columns: minmax(0, 1fr) minmax(0, 1fr);
  grid-template-rows: 19px minmax(0, 1fr);
}
.band + .band {
  box-shadow: -8px 0 #25292c, -9px 0 #3b3f43;
}
.band + .band.focus {
  box-shadow: -1px 0 #572428, 1px 0 #572428, -8px 0 #25292c, -9px 0 #3b3f43;
}
.band h4 {
  grid-column: 1 / 3;
  margin: 0;
  display: flex;
  align-items: center;
  gap: 8px;
  padding: 0 2px;
  border-radius: 2px;
  background: #485057;
  color: #aab0b5;
  font-size: 13px;
  font-weight: 400;
}
.band h4 .ico {
  width: 14px;
  height: 14px;
}
.band h4 .ico:last-child {
  margin-left: auto;
}
.band.on h4 {
  background: #316080;
  color: #e2edf5;
}
.band.on h4 .ico:first-child {
  background: #c4d3df;
  color: #316080;
}
.band.pre h4 {
  background: #943335;
  color: #eedede;
}
.col {
  display: flex;
  flex-direction: column;
  padding-top: 8px;
  align-items: center;
}
.col.low {
  padding-top: 55px;
}
.pre .low {
  padding-top: 8px;
}
.knob {
  height: 65px;
  width: 46px;
  flex: none;
  display: flex;
  flex-direction: column;
  align-items: center;
  color: #a7b0b7;
  font-size: 10px;
  line-height: 12px;
  white-space: nowrap;
}
.knob svg {
  width: 34px;
  height: 40px;
  flex: none;
}
.phase {
  width: 17px;
  height: 17px;
  margin-top: -3px;
  border: 1px solid #66696c;
  background: #33373a;
  color: #a7b0b7;
}
.phase .ico {
  width: 15px;
  height: 15px;
}

/* fader strip */
.strip {
  width: 116px;
  flex: none;
  border: 2px solid #55585b;
  border-radius: 6px;
  background: #25292c;
  padding: 11px 4px 0;
  display: flex;
  flex-direction: column;
}
.pan {
  height: 34px;
  border: 2px solid #0a0a0b;
  border-radius: 3px;
  background: #101214;
  display: flex;
  flex-direction: column;
  align-items: center;
  font-size: 10px;
  line-height: 11px;
}
.pan i {
  width: 4px;
  height: 19px;
  background: linear-gradient(#bfe0f2, #4a7f9d);
}
.pad {
  margin-top: 4px;
  display: grid;
  grid-template-columns: 1fr 1fr;
  grid-template-rows: 1fr 1fr;
  gap: 2px;
  padding: 2px;
  height: 48px;
  border: 1px solid #66696c;
  border-radius: 4px;
  background: #0c0d0f;
}
.pad button {
  display: flex;
  align-items: center;
  justify-content: center;
  background: linear-gradient(#525b64, #3c4854);
  color: #1c2024;
  font-size: 10px;
  font-weight: 700;
}
.pad .solo {
  background: linear-gradient(#f86a66, #e83c3c);
}
.pad .edit {
  background: #2e97a8;
}
.pad .edit .ico {
  width: 13px;
  height: 13px;
}
.fader-area {
  display: flex;
  height: 246px;
  padding-top: 7px;
}
.fader {
  appearance: none;
  writing-mode: vertical-lr;
  direction: rtl;
  width: 20px;
  height: 214px;
  margin: 10px 0 0 5px;
  background: linear-gradient(90deg, transparent 8px, #000 8px, #000 10px, transparent 10px);
}
.fader::-webkit-slider-thumb {
  appearance: none;
  width: 20px;
  height: 39px;
  border: 1px solid #134b66;
  background: linear-gradient(#5fc4e8 0, #5fc4e8 4px, #2e8cba 5px, #3a9cc8 17px, #072a3c 17px, #072a3c 19px, #4cb2da 19px, #4cb2da 32px, #2478a0 33px, #55bce2 37px);
}
.scale {
  width: 32px;
  height: 232px;
}
.scale text {
  font-size: 9px;
  font-weight: 600;
  fill: #b5b8bb;
}
.meter {
  width: 44px;
  height: 232px;
  margin-left: 4px;
  border: 1px solid #66696c;
  border-radius: 4px;
  background: linear-gradient(#1d1e20, #000 18px, #000 212px, #1d1e20);
}
.meter text {
  font-size: 9px;
  font-weight: 600;
  fill: #85888b;
}
.levels {
  display: flex;
  justify-content: space-around;
  align-items: center;
  height: 25px;
  background: #18191b;
  color: #c3d0dd;
}
.levels span {
  color: #777a7d;
}
.rw {
  margin-top: 0;
}
.chan-no {
  display: flex;
  justify-content: space-between;
  align-items: center;
  height: 19px;
  padding: 0 4px;
  background: #000;
}
.chan-no .ico {
  color: #999;
}
.chan-name {
  height: 27px;
  padding: 1px 0 0 5px;
  background: #e8e8e8;
  border-bottom: 6px solid #9cdb1c;
  color: #333;
}
```
FILE: script.js
```js
const icon = name => `<svg class="ico"><use href="#i-${name}"/></svg>`;
const $ = id => document.getElementById(id);

// icon button groups
document.querySelectorAll('[data-icons]').forEach(el => {
  el.innerHTML += el.dataset.icons.split(' ')
    .map(n => `<button class="tb" aria-label="${n}">${icon(n)}</button>`).join('');
});

// inspector equalizer
const eqBands = [
  [4, 'hishelf', true, [['14.2dB', 49, 79], ['1000Hz', 49, 52], ['1.0', 4, 96]]],
  [3, 'bell', false, [['0.0dB'], ['2000Hz'], ['1.0']]],
  [2, 'bell', false, [['0.0dB'], ['800.0Hz'], ['1.0']]],
  [1, 'loshelf', true, [['15.4dB', 49, 82], ['153.3Hz', 0, 33], ['11.3', 47, 52]]]
];
$('eqBars').innerHTML = eqBands.map(([no, shape, on, bars]) => `
  <div><div class="eq-head">${no}${icon(shape)}</div>` + bars.map(([text, from = 0, to = 0]) =>
  `<label class="bar ${on ? 'active' : ''}"><input type="range" value="${to}" aria-label="Band ${no} ${text}" style="--from:${from}%;--to:${to}%"><span>${text}</span></label>`
).join('') + '</div>').join('');

$('sections').innerHTML = [['Insert-Effekte', 'ins'], ['Send-Effekte', 'send'], ['Direct Routing', 'route'], ['Kanalzug', 'strip'], ['Notizen', 'note']]
  .map(([t, i]) => `<div class="section"><button class="section-title">${icon('right')}${t}</button><button class="section-icon" aria-label="${t} Status">${icon(i)}</button></div>`).join('');

// curve in plot coordinates (0..533, 0..243)
const curve = 'M0 46C26 47 48 50 71 56C92 62 109 71 124 83C138 94 150 108 160 122C168 133 173 147 178 158C184 173 187 183 193 183C199 183 203 169 212 154C222 139 235 129 248 122C266 112 284 102 302 92C320 82 337 73 355 67C378 59 402 56 426 54C460 51 500 50 533 50';

$('miniEq').innerHTML = `
  <defs><linearGradient id="dec"><stop offset="0" stop-color="#000"/><stop offset="1" stop-color="#16191c"/></linearGradient></defs>
  <rect x="4" y="2" width="33" height="72" fill="url(#dec)"/><rect x="37" y="2" width="48" height="72" fill="url(#dec)"/><rect x="85" y="2" width="47" height="72" fill="url(#dec)"/>
  <path d="M4 2v72M23 2v72M37 2v72M51 2v72M71 2v72M85 2v72M99 2v72M118 2v72M132 2v72M4 20h143M4 56h143" stroke="#25292c"/>
  <path d="M4 38h143" stroke="#6a4550"/>
  <g transform="translate(4 2) scale(.269 .296)"><path d="${curve}V122H248C230 135 210 183 193 183C180 170 175 145 160 122H0z" fill="#1b4a6a" opacity=".5"/><path d="${curve}" fill="none" stroke="#4f9fd0" stroke-width="6"/></g>
  <g fill="#ddd" font-size="9" font-weight="700"><text x="44" y="15">1</text><text x="83" y="15">4</text><circle cx="47" cy="16" r="2"/><circle cx="86" cy="17" r="2"/></g>`;

// track list
const tracks = [
  ['OH', 'audio', 'm'], ['Room', 'audio', 'm'], ['ROOM', 'group', 'm', '0.00'],
  ['Kick 1', 'audio', 's'], ['Kick 1 Klick', 'audio', 's'], ['Kick 2', 'audio', 's'], ['Kick 3', 'audio', 's'],
  ['KICK', 'group', 's', '0.00'], ['Snare 1', 'audio', 'm'], ['Snare 1 Klick', 'audio', 'm'], ['Snare 2', 'audio', 'm'],
  ['SNARE', 'group', 'm', '-0.22'], ['SAM 1 TT-1', 'inst', 'm'], ['SAM 2 TT 2', 'inst', 'm'], ['TT', 'group', 'm', '0.00'],
  ['Ordner 02', 'folder', 'm'], ['Ordner 03', 'folder', 'm'], ['Ordner 04', 'folder', 'm'], ['Ordner 05', 'folder', 'm'],
  ['Ordner 06', 'folder', 'm'], ['Ordner 07', 'folder', 'm'], ['Ordner 08', 'folder', 'm']
];
const b = (html, label, cls = '') => `<button class="${cls}" aria-label="${label}">${html}</button>`;

function controls(type, value, selected) {
  const rec = `<span>${b(icon('dot'), 'Aufnahme')}${b(icon('mon'), 'Monitor')}</span>`;
  const rw = `<span>${b('R', 'Read')}${b('W', 'Write')}</span>`;
  const edit = second => `<span>${b(icon('e'), 'Bearbeiten', selected ? 'edit' : '')}${b(icon(second), 'Kanal', second === 'stereo' ? 'wide' : '')}</span>`;
  const lane = i => `<button class="lane" aria-label="Spuren">${icon(i)}</button>`;
  if (type === 'group') return `<span>${value}</span>${rw}${edit('stereo')}<button class="param">Lautstärke</button>`;
  if (type === 'folder') return rec + lane('equal');
  return rec + edit(type === 'inst' ? 'inst' : 'stereo') + rw + lane('lanes');
}

const typeIcon = { audio: 'wave', group: 'group', inst: 'inst', folder: 'open' };
$('tracks').innerHTML = tracks.map(([name, type, ms, value], i) => `
  <div class="track ${type} ${i === 7 ? 'selected' : ''}">
    <div class="track-color">${icon(typeIcon[type])}${type === 'folder' ? '' : i + 1}</div>
    <div class="track-main">
      <div class="ms"><button class="${ms === 'm' ? 'muted' : ''}">m</button><button class="${ms === 's' ? 'soloed' : ''}">S</button></div>
      <h3>${name}</h3>
      <div class="controls">${controls(type, value, i === 7)}</div>
    </div>
  </div>`).join('');

// arrangement
const BAR = 138.5, BAR29 = 60.5, CURSOR = 197, LOC_L = 199, LOC_R = 718;
const rowTop = i => 44 + i * 42;
let seed = 7;
const rnd = () => (seed = (seed * 16807) % 2147483647) / 2147483647;

const kicks = [];
for (let bar = 1; bar < 10; bar++) {
  const at = bar === 7 ? [2, 27, 54, 72, 88, 105] : bar === 8 ? [2, 29, 54, 71, 104] : [2, 28, 54, 71];
  at.forEach(x => kicks.push(BAR29 + bar * BAR + x));
}

function spikes(cy, shape) {
  return kicks.map((x, i) => `M${x} ${cy}` + shape(i).map(([dx, a]) => `L${x + dx} ${cy - a}`).join('') +
    shape(i).reverse().map(([dx, a]) => `L${x + dx} ${cy + a}`).join('') + 'z').join('');
}

// drum room sound: each hit decays, the envelope is sampled every pixel
const hits = [];
for (let bar = 1; bar < 10; bar++) {
  [[2, .8, 6], [28, .5, 3], [34.6, 1.4, 6], [54, .5, 4], [70, .8, 6], [104, 1.5, 5]].forEach(([x, a, d]) => hits.push([BAR29 + bar * BAR + x, a, d]));
}
hits.push([BAR29 + BAR + 2, 1, 26]);
for (let x = 1098; x < 1180; x += 17.300) hits.push([x, 1.2, 5]);
[735, 744].forEach(x => hits.push([x, .7, 4]));

function lane(cy, width) {
  let top = '', bottom = '';
  for (let x = LOC_L + 2; x < width; x++) {
    let a = .14;
    hits.forEach(([h, amp, d]) => { if (x >= h && x - h < 90) a = Math.max(a, amp * Math.exp((h - x) / d)); });
    a = Math.max(1, Math.min(9, a * 10 * (.75 + rnd() * .5)));
    top += `L${x} ${(cy - a).toFixed(1)}`;
    bottom = `L${x} ${(cy + a).toFixed(1)}` + bottom;
  }
  return `M${LOC_L + 2} ${cy}${top}${bottom}z`;
}

function drawArrange() {
  const W = $('arrange').clientWidth, H = $('arrange').clientHeight;
  let s = `<rect x="${LOC_L}" y="25" width="${LOC_R - LOC_L}" height="${H}" fill="#aec7e2"/>
    <rect width="${W}" height="25" fill="#a9b0b9"/><rect x="${LOC_L - 3}" width="${LOC_R - LOC_L + 3}" height="25" fill="#dadbdc"/>`;
  const lines = [];
  for (let k = -1; BAR29 + k * BAR / 4 < W; k++) lines.push([Math.floor(BAR29 + k * BAR / 4) + .5, k % 4 === 0, 29 + k / 4]);
  lines.forEach(([x, isBar, no]) => {
    if (no === 30) isBar = false;
    s += `<path d="M${x} 0V${isBar ? 25 : 9}" stroke="${no === 30 ? 'none' : isBar ? '#111' : '#50565c'}"/><path d="M${x} 25V${H}" stroke="${no === 30 ? 'none' : isBar ? '#0c0e10' : '#4c5660'}"/>`;
    if (Number.isInteger(no)) s += `<text x="${x + 4}" y="21">${no}</text>`;
  });
  s += `<path d="M${LOC_L} 0h8l-8 9zM${LOC_R} 0h-8l8 9z" fill="#fff"/>`;
  tracks.forEach(([, type], i) => {
    const y = rowTop(i);
    if (type === 'folder') { s += `<path d="M0 ${y + .5}H${W}" stroke="#8a929b"/>`; return; }
    if (type === 'group') s += `<path d="M0 ${y + 12.500}H${W}" stroke="#a9b5c2"/>`;
    else {
      s += `<rect y="${y + 3}" width="${W}" height="38" fill="${type === 'inst' ? '#eceff2' : '#e1e6ed'}"/>`;
      if (type === 'audio') lines.forEach(([x]) => s += `<path d="M${x} ${y + 3}v38" stroke="#b9c5d0"/>`);
    }
    s += `<path d="M0 ${y - 1.500}H${W}M0 ${y + .5}H${W}" stroke="#828b96"/>`;
    if (type === 'audio' && i > 1) s += `<path d="M0 ${y + 20.500}H${W}" stroke="#3f566c"/>`;
  });
  const wave = d => `<path d="${d}" fill="#a3b7cb" stroke="#42586e"/>`;
  [0, 1].forEach(i => [12, 30].forEach(c => {
    const cy = rowTop(i) + c + .5;
    s += `<path d="M0 ${cy}H${LOC_L}" stroke="#3f566c"/><path d="M120 ${cy - 1}H${LOC_L}" stroke="#3f566c" stroke-dasharray="4 2"/>` + wave(lane(cy, W));
  }));
  s += wave(spikes(rowTop(3) + 20.500, () => [[0, 18], [1, 18], [2, 8], [5, 5], [9, 1]]));
  s += wave(spikes(rowTop(4) + 20.500, i => [[1, [6, 13, 16, 8][i % 4]], [2, 3]]));
  s += wave(spikes(rowTop(5) + 20.500, () => [[0, 18], [2, 18], [3, 3]]));
  s += wave(spikes(rowTop(6) + 20.500, () => [[0, 18], [1, 18], [2, 9], [6, 2]]));
  const sy = rowTop(10) + 20.500;
  s += `<path d="M132 ${sy - 1}H${CURSOR}" stroke="#3f566c" stroke-dasharray="5 1"/><path d="M200 ${sy}l1-11 2 7 3 4-3 4-2 7z" fill="#a3b7cb" stroke="#42586e"/>`;
  s += `<path d="M${CURSOR} 0V${H}" stroke="#3c4044" stroke-width="2"/><path d="M${CURSOR + 1.500} 25V${H}" stroke="#f4f6f8"/>`;
  $('arrange').innerHTML = s;
}
drawArrange();
window.addEventListener('resize', drawArrange);

// insert and send slots
$('inserts').innerHTML = Array.from({ length: 16 }, (_, i) => i === 13
  ? '<div class="slot postline"></div><div class="postfader"></div>' : '<div class="slot"></div>').join('');
$('sends').innerHTML = '<div class="slot"></div>'.repeat(8);

// big equalizer plot
(function () {
  const L = 20, T = 4, W = 533, H = 243;
  const fx = f => L + Math.log10(f / 20) / 3 * W;
  let s = '';
  [[20, 100], [100, 1000], [1000, 10000], [10000, 20000]].forEach(([a, z]) =>
    s += `<rect x="${fx(a)}" y="${T}" width="${fx(z) - fx(a)}" height="${H}" fill="${a === 10000 ? '#020203' : 'url(#dec)'}"/>`);
  [[20, '20'], [50, '50'], [100, '100'], [200, '200'], [500, '500'], [1000, '1 k'], [2000, '2 k'], [5000, '5 k'], [10000, '10 k'], [20000, '20 k']].forEach(([f, t]) =>
    s += `<path d="M${fx(f)} ${T}v${H}" stroke="#34393d"/><text x="${fx(f)}" y="262" text-anchor="middle">${t}</text>`);
  for (let db = 24; db >= -24; db -= 6) {
    const y = T + (24 - db) / 48 * H;
    s += `<path d="M${L} ${y}h${W}" stroke="${db === 0 ? '#75686e' : db % 12 ? '#1d2124' : '#41464a'}"/><text x="18" y="${y + 3}" text-anchor="end">${db > 0 ? '+' : ''}${db}</text>`;
  }
  s += `<g transform="translate(${L} ${T})"><path d="M0 122V46${curve.slice(5)}V122H248C235 129 222 139 212 154C203 169 199 183 193 183C187 183 184 173 178 158C173 147 168 133 160 122z" fill="#2b6d96" fill-opacity=".3"/>
    <path d="${curve}" fill="none" stroke="#559fd0" stroke-width="2"/></g>`;
  [[177, 48, 1], [322, 54, 4]].forEach(([x, y, n]) =>
    s += `<circle cx="${x}" cy="${y}" r="7" fill="#2a2c2e" stroke="#d0d0d0" stroke-width="1.500"/><text x="${x}" y="${y + 4}" text-anchor="middle">${n}</text>`);
  $('plot').innerHTML = s;
})();

// rotary controls, angle 0 points up
function knob(label, angle) {
  return `<div class="knob"><svg viewBox="0 0 34 40" role="slider" aria-label="${label}" aria-valuenow="${angle}">
    <ellipse cx="17" cy="24" rx="13" ry="14" fill="#15171a"/><circle cx="17" cy="20" r="13" fill="#25272a" stroke="#77797b" stroke-width="2"/>
    <path d="M17 8v8" stroke="#f2f2f2" stroke-width="2" transform="rotate(${angle} 17 20)"/>
    <path d="M16 2h2M3 32h2M29 32h2" stroke="#77797b"/></svg>${label}</div>`;
}
const bandData = [
  ['pre', 'pre', 'PRE', 'diamond', [['LC', -128], ['Pre Gain', -12]], [['HC', 128]]],
  ['on focus', 'power', '1 LO', 'loshelf', [['Gain 1', 82], ['Freq 1', -42]], [['Q 1', 112]]],
  ['', 'powerf', '2 LMF', 'bell', [['Gain 2', 0], ['Freq 2', -5]], [['Q 2', -106]]],
  ['', 'powerf', '3 HMF', 'bell', [['Gain 3', 0], ['Freq 3', 18]], [['Q 3', -106]]],
  ['on', 'power', '4 HI', 'hishelf', [['Gain 4', 76], ['Freq 4', 0]], [['Q 4', -106]]]
];
$('bands').innerHTML = bandData.map(([cls, i1, title, i2, left, right]) => `
  <div class="band ${cls}"><h4>${icon(i1)}${title}${icon(i2)}</h4>
    <div class="col">${left.map(k => knob(...k)).join('')}</div>
    <div class="col low">${right.map(k => knob(...k)).join('')}${cls === 'pre' ? `<button class="phase" aria-label="Phase">${icon('phase')}</button>` : ''}</div>
  </div>`).join('');

// fader and meter scales
$('scale').innerHTML = [[6, 15], [0, 57], [5, 95], [10, 124], [15, 147], [20, 164], [30, 186], [40, 199], ['', 206], ['00', 215]]
  .map(([t, y]) => `<path d="M1 ${y}.5h19" stroke="#6d7073"/><text x="32" y="${y + 2}" text-anchor="end">${t}</text>`).join('');
$('meter').innerHTML = [[0, 14], [6, 43], [12, 72], [18, 102], [24, 130], [30, 156], [40, 189], [50, 211]]
  .map(([t, y]) => `<path d="M2 ${y}.5h10M31 ${y}.5h10" stroke="#55585b"/><text x="21" y="${y + 3}" text-anchor="middle">${t}</text>`).join('');
```
